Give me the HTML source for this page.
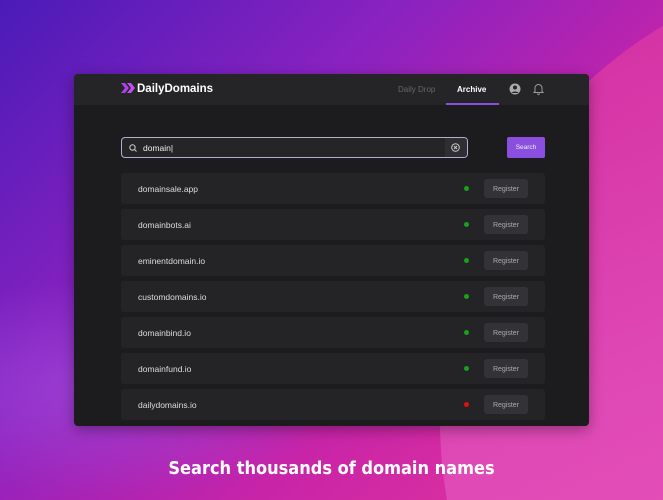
<!DOCTYPE html>
<html><head><style>
*{margin:0;padding:0;box-sizing:border-box}
html,body{width:663px;height:500px;overflow:hidden}
body{font-family:"Liberation Sans",sans-serif;position:relative;
background:linear-gradient(135deg,#4a1bb8 0%,#8a22c0 35%,#c824a8 65%,#e8389a 100%);}
.bg{position:absolute;left:0;top:0;width:663px;height:500px;overflow:hidden}
.circle{position:absolute;left:440px;top:-40px;width:920px;height:920px;border-radius:50%;
background:linear-gradient(160deg,#d42c9c 0%,#e04cb8 40%,#f060c0 100%);opacity:.9}
.glow{position:absolute;left:-150px;top:280px;width:500px;height:220px;border-radius:50%;background:radial-gradient(#a050e0,transparent 70%);opacity:.6}
.win{position:absolute;left:74px;top:74px;width:515px;height:352px;background:#1c1c1f;border-radius:4px;overflow:hidden;box-shadow:0 4px 14px rgba(0,0,0,.35)}
.hdr{height:31px;background:#252528;position:relative}
.logo{position:absolute;left:47px;top:9px;color:#fff;font-weight:bold;font-size:11.5px}
.logo svg{vertical-align:-1px;margin-right:1px}
.nav{position:absolute;top:11px;font-size:8px}
.ul{position:absolute;left:372px;top:29px;width:53px;height:2px;background:#8b4fe0}
.search{position:absolute;left:47px;top:63px;width:347px;height:21px;border:1px solid #b8a8d8;border-radius:4px;background:#252528}
.search .t{position:absolute;left:21px;top:5px;color:#eee;font-size:8.5px}
.search .x{position:absolute;right:0;top:0;width:22px;height:19px;background:#2f2f33;border-radius:0 3px 3px 0}
.btn{position:absolute;left:433px;top:63px;width:38px;height:21px;background:#8b4fe0;border-radius:2px;color:#eee;font-size:6.5px;text-align:center;line-height:21px}
.row{position:absolute;left:47px;width:424px;height:31px;background:#242427;border-radius:3px}
.row .n{position:absolute;left:17px;top:11px;color:#ddd;font-size:8.5px}
.row .d{position:absolute;left:343px;top:13px;width:5px;height:5px;border-radius:50%;background:#1aa01a}
.row .r{position:absolute;left:363px;top:6px;width:44px;height:19px;background:#333337;border-radius:3px;color:#aaa;font-size:7px;text-align:center;line-height:21px}
.cap{position:absolute;left:0;width:663px;top:458px;text-align:center;color:#fff;font-size:18px;font-weight:bold;font-family:"DejaVu Sans Condensed","Liberation Sans",sans-serif}
</style></head><body>
<div class="bg"><div class="glow"></div><div class="circle"></div></div>
<div class="win">
<div class="hdr">
<div class="logo"><svg width="15" height="10" viewBox="0 0 15 10"><path d="M0 0h4l4 5-4 5H0l4-5z" fill="#b040e8"/><path d="M6 0h4l4 5-4 5H6l4-5z" fill="#c050f0"/></svg>DailyDomains</div>
<div class="nav" style="left:324px;color:#666">Daily Drop</div>
<div class="nav" style="left:383px;color:#fff;font-weight:bold">Archive</div>
<div class="ul"></div>
<svg style="position:absolute;left:435px;top:9px" width="12" height="12" viewBox="0 0 12 12"><circle cx="6" cy="6" r="5.5" fill="#aaa"/><circle cx="6" cy="4.5" r="2" fill="#252528"/><path d="M2.5 10c1-2 6-2 7 0" fill="#252528"/></svg>
<svg style="position:absolute;left:459px;top:9px" width="11" height="12" viewBox="0 0 11 12"><path d="M2 8.5V5a3.5 3.5 0 017 0v3.5l1 1H1z M4.5 10.5a1 1 0 002 0" fill="none" stroke="#999" stroke-width="1"/></svg>
</div>
<div class="search"><svg style="position:absolute;left:7px;top:6px" width="8" height="8" viewBox="0 0 8 8"><circle cx="3.5" cy="3.5" r="2.7" fill="none" stroke="#ccc" stroke-width="1"/><path d="M5.5 5.5L7.5 7.5" stroke="#ccc"/></svg><div class="t">domain|</div><div class="x"><svg style="position:absolute;left:6px;top:5px" width="9" height="9" viewBox="0 0 9 9"><circle cx="4.5" cy="4.5" r="3.8" fill="none" stroke="#ccc"/><path d="M3 3l3 3M6 3l-3 3" stroke="#ccc"/></svg></div></div>
<div class="btn">Search</div>
<div class="row" style="top:99px"><div class="n">domainsale.app</div><div class="d"></div><div class="r">Register</div></div>
<div class="row" style="top:135px"><div class="n">domainbots.ai</div><div class="d"></div><div class="r">Register</div></div>
<div class="row" style="top:171px"><div class="n">eminentdomain.io</div><div class="d"></div><div class="r">Register</div></div>
<div class="row" style="top:207px"><div class="n">customdomains.io</div><div class="d"></div><div class="r">Register</div></div>
<div class="row" style="top:243px"><div class="n">domainbind.io</div><div class="d"></div><div class="r">Register</div></div>
<div class="row" style="top:279px"><div class="n">domainfund.io</div><div class="d"></div><div class="r">Register</div></div>
<div class="row" style="top:315px"><div class="n">dailydomains.io</div><div class="d" style="background:#e01010"></div><div class="r">Register</div></div>
</div>
<div class="cap">Search thousands of domain names</div>
</body></html>
